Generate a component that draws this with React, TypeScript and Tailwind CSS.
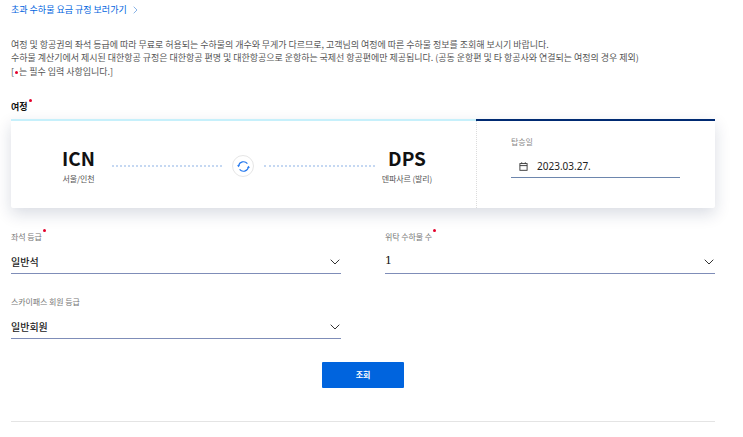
import React from "react";

const FONT = "font-['Noto_Sans_CJK_KR','Noto_Sans',sans-serif]";

function Dot({ className }: { className: string }) {
  return <span className={`absolute w-[3px] h-[3px] rounded-full bg-[#e4002b] ${className}`} />;
}

function Chevron() {
  return (
    <svg width="10" height="6" viewBox="0 0 10 6" fill="none" stroke="#333" strokeWidth="1">
      <path d="M0.7 0.7 L5 5 L9.3 0.7" />
    </svg>
  );
}

function Select({ label, value, required, serif }: { label: string; value: string; required?: boolean; serif?: boolean }) {
  return (
    <div className="w-[330px]">
      <div className="h-[14px] flex items-center">
        <span className="relative text-[8px] leading-[14px] text-[#777] tracking-[-0.1px]">
          {label}
          {required && <Dot className="right-[-4px] top-[-1px]" />}
        </span>
      </div>
      <div className="h-[30px] border-b border-[#7f8db8] flex items-center justify-between pt-[6px]">
        <span className={serif ? "text-[11px] text-[#111] font-['DejaVu_Serif',serif]" : "text-[10px] font-medium text-[#222]"}>{value}</span>
        <span className="mr-[1px] flex"><Chevron /></span>
      </div>
    </div>
  );
}

export default function App() {
  return (
    <div className={`w-[743px] h-[437px] overflow-hidden bg-white pl-[11px] ${FONT}`}>
      <div className="w-[704px]">
        <div className="h-[20px] flex items-center gap-[6px] text-[9px] text-[#0064de]">
          <span>초과 수하물 요금 규정 보러가기</span>
          <svg width="5" height="8" viewBox="0 0 5 8" fill="none" stroke="#6a9fe0" strokeWidth="0.8">
            <path d="M0.7 0.7 L4 4 L0.7 7.3" />
          </svg>
        </div>

        <div className="mt-[18px] h-[40px] text-[9px] leading-[13.4px] text-[#555] whitespace-nowrap tracking-[-0.03px]">
          <p>여정 및 항공권의 좌석 등급에 따라 무료로 허용되는 수하물의 개수와 무게가 다르므로, 고객님의 여정에 따른 수하물 정보를 조회해 보시기 바랍니다.</p>
          <p>수하물 계산기에서 제시된 대한항공 규정은 대한항공 편명 및 대한항공으로 운항하는 국제선 항공편에만 제공됩니다. (공동 운항편 및 타 항공사와 연결되는 여정의 경우 제외)</p>
          <p>
            [<span className="inline-block w-[3px] h-[3px] rounded-full bg-[#e4002b] align-middle mx-[1px]" />는 필수 입력 사항입니다.]
          </p>
        </div>

        <div className="mt-[22px] h-[14px] flex items-center">
          <span className="relative text-[9px] leading-[14px] font-bold text-[#111]">
            여정
            <Dot className="right-[-4px] top-[-1px]" />
          </span>
        </div>

        <div className="mt-[5px] h-[89px] flex bg-white rounded-b-[2px] shadow-[0_6px_16px_rgba(20,40,80,0.16)]">
          <div className="w-[465px] border-t-2 border-[#c6f0fb] flex items-center pl-[51px]">
            <div className="w-[33px] flex flex-col items-center shrink-0 mt-[3px]">
              <span className="mb-[2px] text-[19px] leading-[24px] font-bold text-[#111]">ICN</span>
              <span className="text-[8px] leading-[14px] text-[#555] whitespace-nowrap tracking-[-0.1px]">서울/인천</span>
            </div>
            <div className="ml-[17px] w-[110px] shrink-0 border-t-2 border-dotted border-[#c5d8f2] mt-[3px]" />
            <div className="mx-[10px] w-[22px] h-[22px] rounded-full border border-[#e6e6e6] flex items-center justify-center shrink-0 mt-[3px]">
              <svg width="13" height="13" viewBox="0 0 13 13" fill="none" stroke="#2478ee" strokeWidth="1.2">
                <path d="M1.6 6 A5 5 0 0 1 10.4 3.6" />
                <path d="M11.4 7 A5 5 0 0 1 2.6 9.4" />
                <path d="M0 5.2 L3 5.2 L1.5 7.2 Z" fill="#2478ee" stroke="none" />
                <path d="M10 7.8 L13 7.8 L11.5 5.8 Z" fill="#2478ee" stroke="none" />
              </svg>
            </div>
            <div className="w-[111px] shrink-0 border-t-2 border-dotted border-[#c5d8f2] mt-[3px]" />
            <div className="ml-[7px] w-[50px] shrink-0 flex flex-col items-center mt-[3px]">
              <span className="mb-[2px] text-[19px] leading-[24px] font-bold text-[#111]">DPS</span>
              <span className="text-[8px] leading-[14px] text-[#555] whitespace-nowrap tracking-[-0.1px]">덴파사르 (발리)</span>
            </div>
          </div>
          <div className="flex-1 flex flex-col">
            <div className="h-[2px] bg-[#002a72]" />
            <div className="flex-1 border-l border-dotted border-[#dcdcdc] pl-[34px] pt-[15px]">
              <div className="text-[8px] leading-[12px] text-[#888] tracking-[-0.1px]">탑승일</div>
              <div className="mt-[4px] w-[169px] h-[26px] border-b border-[#6d86ad] flex items-center pl-[8px] gap-[9px] pt-[3px]">
                <svg width="9" height="9" viewBox="0 0 9 9" fill="none" stroke="#333" strokeWidth="0.9">
                  <rect x="0.9" y="1.6" width="7.2" height="6.7" />
                  <path d="M0.9 3.6 H8.1 M2.7 0.3 V1.6 M6.3 0.3 V1.6" />
                </svg>
                <span className="text-[10px] text-[#222] font-['Noto_Sans',sans-serif]">2023.03.27.</span>
              </div>
            </div>
          </div>
        </div>

        <div className="mt-[22px] flex justify-between">
          <Select label="좌석 등급" value="일반석" required />
          <Select label="위탁 수하물 수" value="1" required serif />
        </div>
        <div className="mt-[21px]">
          <Select label="스카이패스 회원 등급" value="일반회원" />
        </div>

        <div className="mt-[23px] flex justify-center">
          <button className="w-[82px] h-[26px] bg-[#0064de] rounded-[1px] text-white text-[8px] font-bold">조회</button>
        </div>

        <div className="mt-[33px] border-t border-[#e4e4e4]" />
      </div>
    </div>
  );
}
